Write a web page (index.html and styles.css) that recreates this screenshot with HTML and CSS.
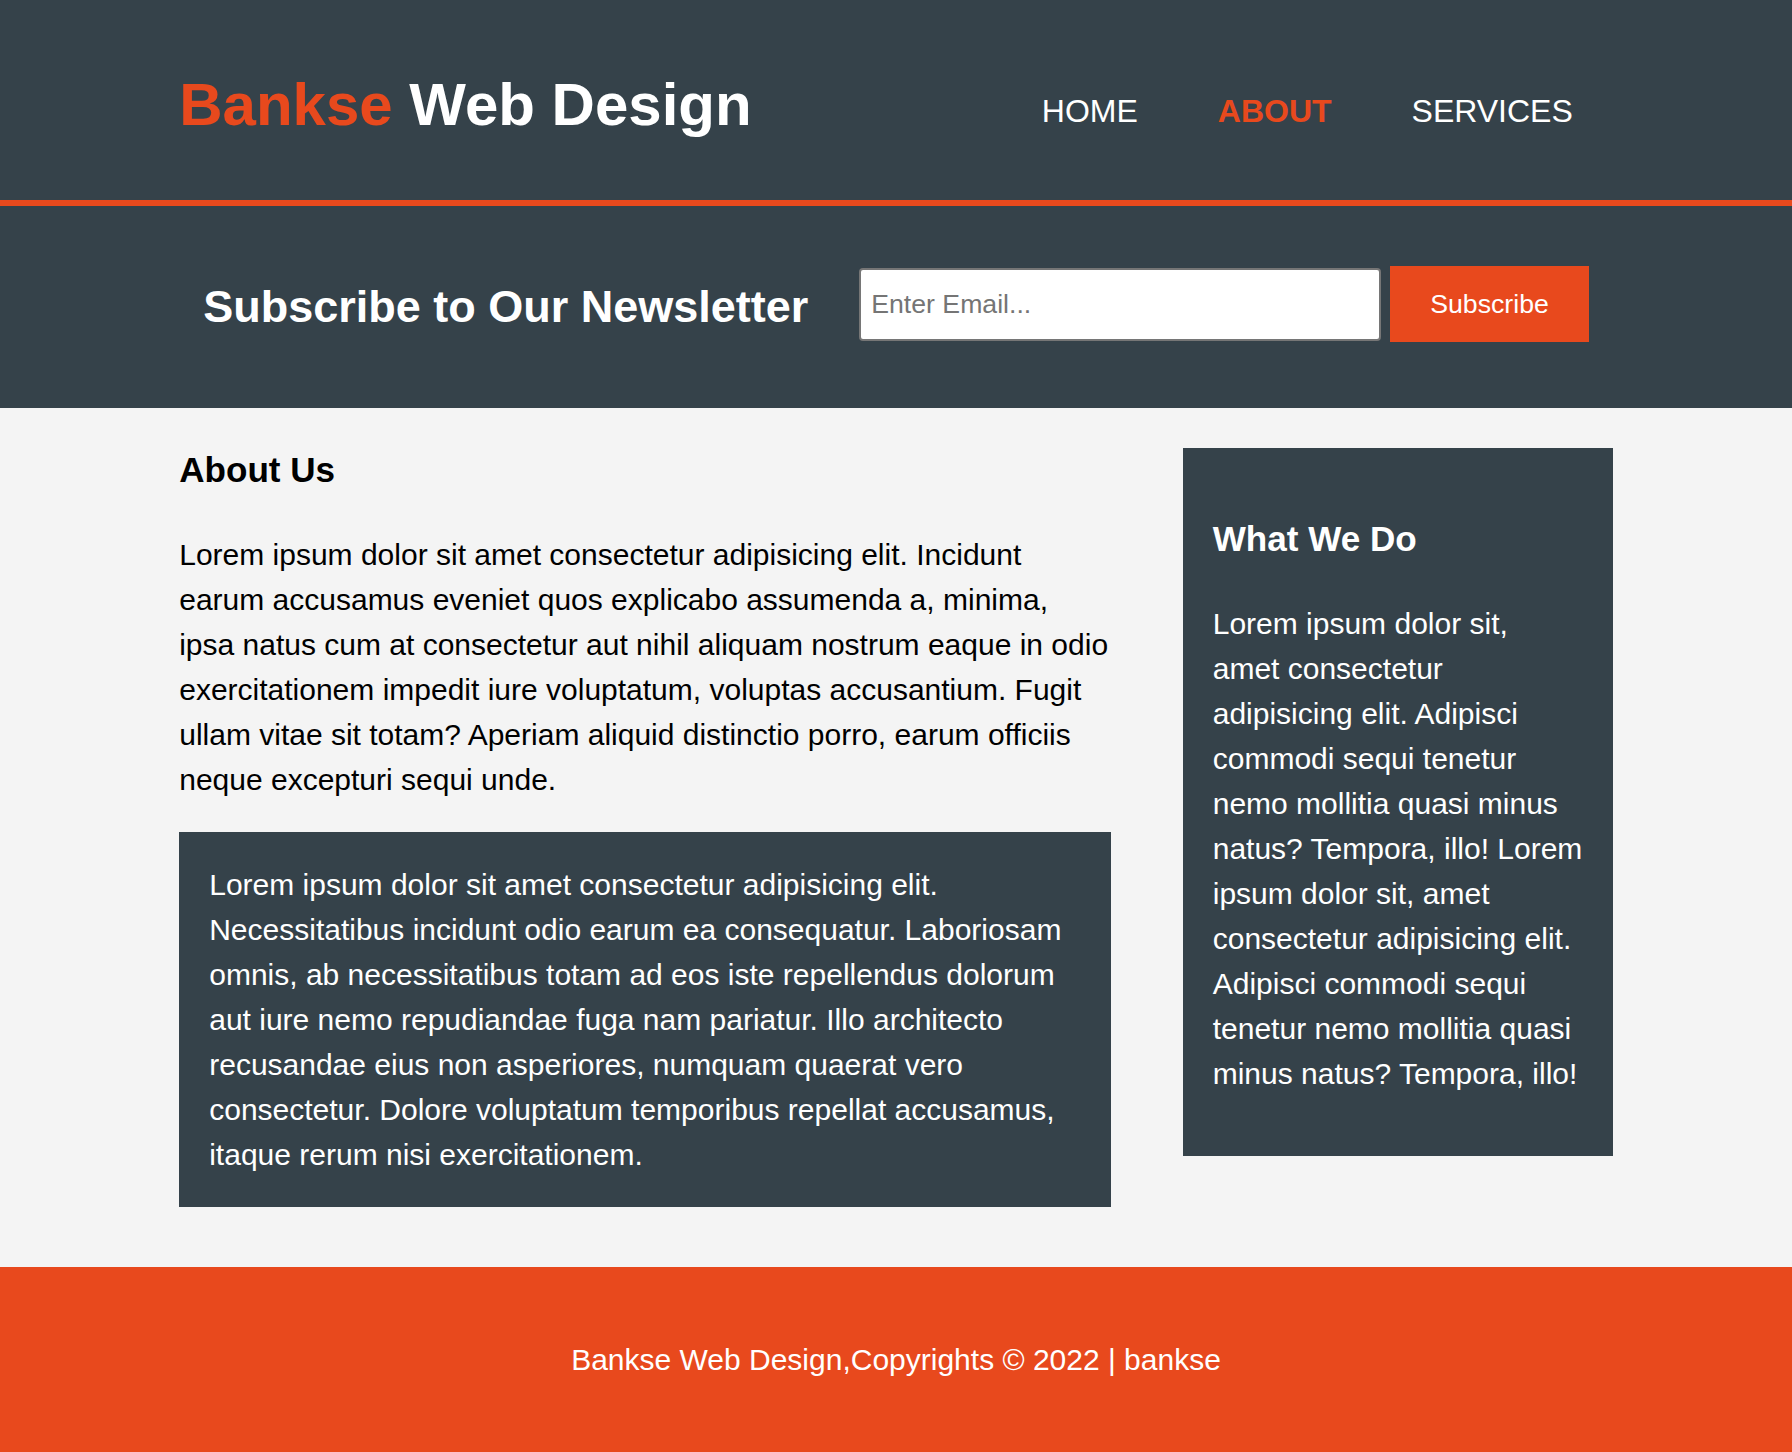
FILE: index.html
```html
<!DOCTYPE html>
<html lang="en">
<head>
<meta charset="utf-8">
<title>Bankse Web Design | About</title>
<link rel="stylesheet" href="styles.css">
</head>
<body>
<header class="header">
  <div class="container header-inner">
    <div class="branding">
      <h1 class="brand"><span class="highlight">Bankse</span> Web Design</h1>
    </div>
    <nav class="nav">
      <ul class="nav-list">
        <li class="nav-item"><a class="nav-link" href="#">Home</a></li>
        <li class="nav-item"><a class="nav-link nav-link-current" href="#">About</a></li>
        <li class="nav-item"><a class="nav-link" href="#">Services</a></li>
      </ul>
    </nav>
  </div>
</header>

<section class="newsletter">
  <div class="container newsletter-inner">
    <h2 class="newsletter-title">Subscribe to Our Newsletter</h2>
    <form class="subscribe-form">
      <input class="email-input" type="email" placeholder="Enter Email...">
      <button class="subscribe-btn" type="submit">Subscribe</button>
    </form>
  </div>
</section>

<section class="container main">
  <article class="main-col">
    <h3 class="page-title">About Us</h3>
    <p class="lead">Lorem ipsum dolor sit amet consectetur adipisicing elit. Incidunt earum accusamus eveniet quos explicabo assumenda a, minima, ipsa natus cum at consectetur aut nihil aliquam nostrum eaque in odio exercitationem impedit iure voluptatum, voluptas accusantium. Fugit ullam vitae sit totam? Aperiam aliquid distinctio porro, earum officiis neque excepturi sequi unde.</p>
    <div class="dark">
      <p class="dark-text">Lorem ipsum dolor sit amet consectetur adipisicing elit. Necessitatibus incidunt odio earum ea consequatur. Laboriosam omnis, ab necessitatibus totam ad eos iste repellendus dolorum aut iure nemo repudiandae fuga nam pariatur. Illo architecto recusandae eius non asperiores, numquam quaerat vero consectetur. Dolore voluptatum temporibus repellat accusamus, itaque rerum nisi exercitationem.</p>
    </div>
  </article>
  <aside class="sidebar">
    <div class="dark">
      <h3 class="sidebar-title">What We Do</h3>
      <p class="sidebar-text">Lorem ipsum dolor sit, amet consectetur adipisicing elit. Adipisci commodi sequi tenetur nemo mollitia quasi minus natus? Tempora, illo! Lorem ipsum dolor sit, amet consectetur adipisicing elit. Adipisci commodi sequi tenetur nemo mollitia quasi minus natus? Tempora, illo!</p>
    </div>
  </aside>
</section>

<footer class="footer">
  <p class="footer-text">Bankse Web Design,Copyrights &copy; 2022 | bankse</p>
</footer>
</body>
</html>
```

FILE: styles.css
```css
body {
  margin: 0;
  padding: 0;
  font-family: "Liberation Sans", Arial, Helvetica, sans-serif;
  font-size: 30px;
  line-height: 1.5;
  background: #f4f4f4;
  color: #000;
}

.container {
  width: 80%;
  margin: 0 auto;
}

/* Header */
.header {
  background: #35424a;
  color: #fff;
  padding-top: 60px;
  min-height: 140px;
  border-bottom: 6px solid #e8491d;
}

.header-inner {
  display: flex;
  justify-content: space-between;
  align-items: flex-start;
}

.brand {
  margin: 0;
  font-size: 60px;
  line-height: 90px;
  font-weight: bold;
}

.highlight {
  color: #e8491d;
}

.nav {
  margin-top: 27px;
}

.nav-list {
  list-style: none;
  margin: 0;
  padding: 0;
  display: flex;
}

.nav-item {
  padding: 0 40px;
  font-size: 32px;
  line-height: 48px;
}

.nav-link {
  color: #fff;
  text-decoration: none;
  text-transform: uppercase;
}

.nav-link-current {
  color: #e8491d;
  font-weight: bold;
}

/* Newsletter */
.newsletter {
  background: #35424a;
  color: #fff;
  padding: 30px;
}

.newsletter-inner {
  display: flex;
  justify-content: space-between;
  align-items: flex-start;
}

.newsletter-title {
  margin: 37.35px 0;
  font-size: 45px;
  line-height: 67.5px;
  font-weight: bold;
}

.subscribe-form {
  margin-top: 30px;
  display: flex;
  align-items: center;
  gap: 9px;
}

.email-input {
  box-sizing: border-box;
  width: 522px;
  height: 73px;
  padding: 0 10px;
  border: 2px solid #767676;
  border-radius: 4px;
  background: #fff;
  font-family: "Liberation Sans", Arial, sans-serif;
  font-size: 26.67px;
  color: #000;
}

.email-input::placeholder {
  color: #757575;
}

.subscribe-btn {
  height: 76px;
  padding: 0 40px;
  border: 0;
  background: #e8491d;
  color: #fff;
  font-family: "Liberation Sans", Arial, sans-serif;
  font-size: 26.67px;
}

/* Main */
.main {
  display: flex;
  justify-content: space-between;
  align-items: flex-start;
}

.main-col {
  width: 65%;
}

.page-title {
  margin: 36px 0 35.1px;
  font-size: 35.1px;
  line-height: 52.65px;
  font-weight: bold;
}

.lead {
  margin: 30px 0;
}

.dark {
  padding: 30px;
  background: #35424a;
  color: #fff;
  margin-top: 20px;
  margin-bottom: 20px;
}

.dark-text {
  margin: 0;
}

.sidebar {
  width: 30%;
  margin-top: 20px;
}

.sidebar-title {
  margin: 35.1px 0;
  font-size: 35.1px;
  line-height: 52.65px;
  font-weight: bold;
}

.sidebar-text {
  margin: 30px 0;
}

/* Footer */
.footer {
  margin-top: 40px;
  padding: 40px;
  background: #e8491d;
  color: #fff;
  text-align: center;
}

.footer-text {
  margin: 30px 0;
}
```
